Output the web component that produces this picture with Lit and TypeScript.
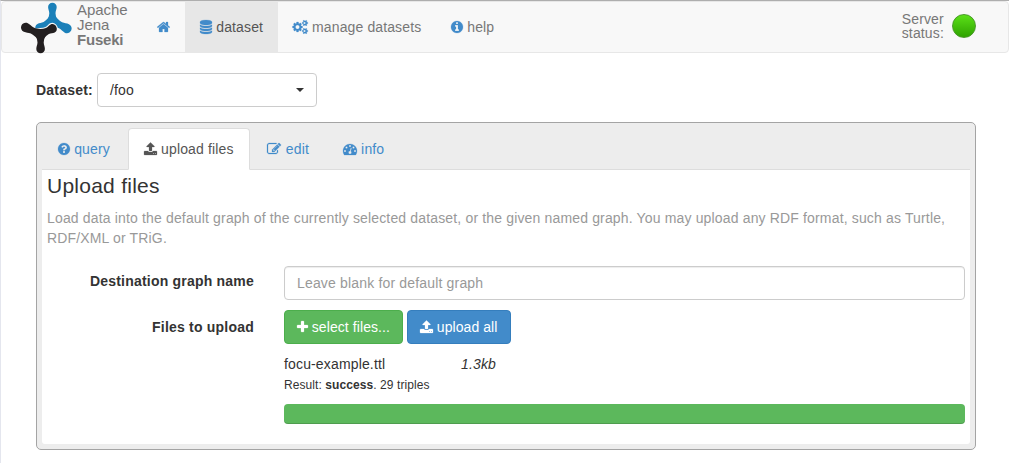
import { LitElement, html, css, svg } from "lit";
import { customElement, property } from "lit/decorators.js";

const DISC =
  "m640 416q0 209-103 385.5t-279.5 279.5-385.5 103-385.5-103-279.5-279.5-103-385.5 103-385.5 279.5-279.5 385.5-103 385.5 103 279.5 279.5 103 385.5z";

const SMALL_COG =
  "v140q0 16-149 31-12 27-30 52 51 113 51 138 0 4-4 7-122 71-124 71-8 0-46-47t-52-68q-20 2-30 2t-30-2q-14 21-52 68t-46 47q-2 0-124-71-4-3-4-7 0-25 51-138-18-25-30-52-149-15-149-31v-140q0-16 149-31 13-29 30-52-51-113-51-138 0-4 4-7 4-2 35-20t59-34 30-16q8 0 46 46.5t52 67.5q20-2 30-2t30 2q51-71 92-112l6-2q4 0 124 70 4 3 4 7 0 25-51 138 17 23 30 52 149 15 149 31z";

const GAUGE_DOT = "q0-53-37.5-90.5t-90.5-37.5-90.5 37.5-37.5 90.5 37.5 90.5 90.5 37.5 90.5-37.5 37.5-90.5z";

const DB_RING = "q237 0 443-43t325-127v170q0 69-103 128t-280 93.5-385 34.5-385-34.5-280-93.5-103-128v-170q119 84 325 127t443 43z";

interface Glyph {
  x: number;
  w: number;
  d: string;
}

/* Glyphs on a 1792-unit em; x and w give the advance box. */
const GLYPHS: Record<string, Glyph> = {
  home: {
    x: 64,
    w: 1664,
    d: "M1472 992v480q0 26-19 45t-45 19h-384v-384h-256v384h-384q-26 0-45-19t-19-45v-480q0-1 .5-3t.5-3l575-474 575 474q1 2 1 6zm223-69l-62 74q-8 9-21 11h-3q-13 0-21-7l-692-577-692 577q-12 8-24 7-13-2-21-11l-62-74q-8-10-7-23.5t11-21.5l719-599q32-26 76-26t76 26l244 204v-195q0-14 9-23t23-9h192q14 0 23 9t9 23v408l219 182q10 8 11 21.5t-7 23.5z",
  },
  database: {
    x: 128,
    w: 1536,
    d: `M896 768${DB_RING}M896 1536${DB_RING}M896 1152${DB_RING}M896 0q208 0 385 34.5t280 93.5 103 128v128q0 69-103 128t-280 93.5-385 34.5-385-34.5-280-93.5-103-128v-128q0-69 103-128t280-93.5 385-34.5z`,
  },
  cogs: {
    x: 0,
    w: 1920,
    d: `M832 896q0-106-75-181t-181-75-181 75-75 181 75 181 181 75 181-75 75-181zm768 512q0-52-38-90t-90-38-90 38-38 90q0 53 37.5 90.5t90.5 37.5 90.5-37.5 37.5-90.5zm0-1024q0-52-38-90t-90-38-90 38-38 90q0 53 37.5 90.5t90.5 37.5 90.5-37.5 37.5-90.5zm-384 421v185q0 10-7 19.5t-16 10.5l-155 24q-11 35-32 76 34 48 90 115 7 11 7 20 0 12-7 19-23 30-82.5 89.5t-78.5 59.5q-11 0-21-7l-115-90q-37 19-77 31-11 108-23 155-7 24-30 24h-186q-11 0-20-7.5t-10-17.5l-23-153q-34-10-75-31l-118 89q-7 7-20 7-11 0-21-8-144-133-144-160 0-9 7-19 10-14 41-53t47-61q-23-44-35-82l-152-24q-10-1-17-9.5t-7-19.5v-185q0-10 7-19.5t16-10.5l155-24q11-35 32-76-34-48-90-115-7-11-7-20 0-12 7-20 22-30 82-89t79-59q11 0 21 7l115 90q34-18 77-32 11-108 23-154 7-24 30-24h186q11 0 20 7.5t10 17.5l23 153q34 10 75 31l118-89q8-7 20-7 11 0 21 8 144 133 144 160 0 8-7 19-12 16-42 54t-45 60q23 48 34 82l152 23q10 2 17 10.5t7 19.5zM1920 1338${SMALL_COG}M1920 314${SMALL_COG}`,
  },
  info: {
    x: 128,
    w: 1536,
    d: `M1152 1376v-160q0-14-9-23t-23-9h-96v-512q0-14-9-23t-23-9h-320q-14 0-23 9t-9 23v160q0 14 9 23t23 9h96v320h-96q-14 0-23 9t-9 23v160q0 14 9 23t23 9h448q14 0 23-9t9-23zm-128-896v-160q0-14-9-23t-23-9h-192q-14 0-23 9t-9 23v160q0 14 9 23t23 9h192q14 0 23-9t9-23z${DISC}`,
  },
  question: {
    x: 128,
    w: 1536,
    d: "M1024 1376v-192q0-14-9-23t-23-9h-192q-14 0-23 9t-9 23v192q0 14 9 23t23 9h192q14 0 23-9t9-23zm256-672q0-88-55.5-163t-138.5-116-170-41q-243 0-371 213-15 24 8 42l132 100q7 6 19 6 16 0 25-12 53-68 86-92 34-24 86-24 48 0 85.5 26t37.5 59q0 38-20 61t-68 45q-63 28-115.5 86.5t-52.5 125.5v36q0 14 9 23t23 9h192q14 0 23-9t9-23q0-19 21.5-49.5t54.5-49.5q32-18 49-28.5t46-35 44.5-48 28-60.5 12.5-81zm384 192q0 209-103 385.5t-279.5 279.5-385.5 103-385.5-103-279.5-279.5-103-385.5 103-385.5 279.5-279.5 385.5-103 385.5 103 279.5 279.5 103 385.5z",
  },
  upload: {
    x: 64,
    w: 1664,
    d: "M1344 1472q0-26-19-45t-45-19-45 19-19 45 19 45 45 19 45-19 19-45zm256 0q0-26-19-45t-45-19-45 19-19 45 19 45 45 19 45-19 19-45zm128-224v320q0 40-28 68t-68 28h-1472q-40 0-68-28t-28-68v-320q0-40 28-68t68-28h427q21 56 70.5 92t110.5 36h256q61 0 110.5-36t70.5-92h427q40 0 68 28t28 68zm-325-648q-17 40-59 40h-256v448q0 26-19 45t-45 19h-256q-26 0-45-19t-19-45v-448h-256q-42 0-59-40-17-39 14-69l448-448q18-19 45-19t45 19l448 448q31 30 14 69z",
  },
  edit: {
    x: 0,
    w: 1792,
    d: "M888 1184l116-116-152-152-116 116v56h96v96h56zm440-720q-16-16-33 1l-350 350q-17 17-1 33t33-1l350-350q17-17 1-33zm80 594v190q0 119-84.5 203.5t-203.5 84.5h-832q-119 0-203.5-84.5t-84.5-203.5v-832q0-119 84.5-203.5t203.5-84.5h832q63 0 117 25 15 7 18 23 3 17-9 29l-49 49q-14 14-32 8-23-6-45-6h-832q-66 0-113 47t-47 113v832q0 66 47 113t113 47h832q66 0 113-47t47-113v-126q0-13 9-22l64-64q15-15 35-7t20 29zm-96-738l288 288-672 672h-288v-288zm444 132l-92 92-288-288 92-92q28-28 68-28t68 28l152 152q28 28 28 68t-28 68z",
  },
  gauge: {
    x: 0,
    w: 1792,
    d: `M384 1152${GAUGE_DOT}M576 704${GAUGE_DOT}M1004 1185l101-382q6-26-7.5-48.5t-38.5-29.5-48 6.5-30 39.5l-101 382q-60 5-107 43.5t-63 98.5q-20 77 20 146t117 89 146-20 89-117q16-60-6-117t-72-91zM1664 1152${GAUGE_DOT}M1024 512${GAUGE_DOT}M1472 704${GAUGE_DOT}M1792 1152q0 261-141 483-19 29-54 29h-1402q-35 0-54-29-141-221-141-483 0-182 71-348t191-286 286-191 348-71 348 71 286 191 191 286 71 348z`,
  },
  plus: {
    x: 192,
    w: 1408,
    d: "M1600 736v192q0 40-28 68t-68 28h-416v416q0 40-28 68t-68 28h-192q-40 0-68-28t-28-68v-416h-416q-40 0-68-28t-28-68v-192q0-40 28-68t68-28h416v-416q0-40 28-68t68-28h192q40 0 68 28t28 68v416h416q40 0 68 28t28 68z",
  },
};

@customElement("fa-icon")
class FaIcon extends LitElement {
  static styles = css`
    :host {
      display: inline-block;
      height: 14px;
      margin-right: 0.3px;
      vertical-align: -2px;
      line-height: 0;
    }
    .glyph {
      display: block;
      fill: currentColor;
      stroke: currentColor;
      stroke-width: 30;
      overflow: visible;
    }
  `;
  @property() name = "home";

  render() {
    const g = GLYPHS[this.name];
    return html`<svg class="glyph" width=${g.w / 128} height="14" viewBox="${g.x} 0 ${g.w} 1792"><path d=${g.d}></path></svg>`;
  }
}

/* One lobe of the propeller, pointing up from the hub. */
const LOBE =
  "M-6 3.4C-5.6 -1-3.2 -3.5-3.1 -8C-3.2 -10.3-4.3 -12-4.3 -14.2C-4.3 -16.6-2.4 -18.4 0 -18.4C2.4 -18.4 4.3 -16.6 4.3 -14.2C4.3 -12 3.2 -10.3 3.1 -8C3.2 -3.5 5.6 -1 6 3.4Z";

/* Each lobe is [angle, width factor, length factor]. */
const lobes = (list: number[][]) =>
  list.map(([a, w, l]) => svg`<path d=${LOBE} transform="rotate(${a}) scale(${w} ${l})"></path>`);

@customElement("app-root")
class AppRoot extends LitElement {
  static styles = css`
    :host {
      display: block;
      box-sizing: border-box;
      height: 463px;
      overflow: hidden;
      border-top: 1px solid #aeaeae;
      border-left: 1px solid #e4e6ee;
      background: #fff;
      color: #333;
      font: 14px/20px "Liberation Sans", Arial, sans-serif;
      letter-spacing: 0.15px;
    }
    * {
      box-sizing: border-box;
    }
    .navbar {
      display: flex;
      height: 52px;
      border: 1px solid #e7e7e7;
      border-radius: 4px;
      background: #f8f8f8;
      color: #777;
    }
    .brand {
      display: flex;
      width: 140px;
      padding-left: 18px;
      gap: 4px;
      font-size: 15px;
      line-height: 15px;
      letter-spacing: -0.05px;
    }
    .brand b {
      letter-spacing: -0.2px;
    }
    .logo {
      flex: none;
      width: 53px;
      height: 52px;
      overflow: visible;
    }
    .item {
      padding: 15px 14.7px 15px 15px;
      white-space: nowrap;
      letter-spacing: 0.12px;
    }
    .item fa-icon {
      color: #428bca;
    }
    .item.active {
      background: #e7e7e7;
      color: #555;
    }
    .status {
      display: flex;
      margin-left: auto;
      padding: 10px 32px 0 0;
      line-height: 14px;
      gap: 8px;
    }
    .lamp {
      width: 24px;
      height: 24px;
      margin-top: 2px;
      border: 1px solid #4a9a2a;
      border-radius: 50%;
      background: linear-gradient(#5be018, #2fa300);
    }
    .main {
      padding: 20px 33px 0 35px;
    }
    .picker {
      display: flex;
      align-items: center;
      gap: 4px;
      font-weight: bold;
    }
    .picker-label {
      width: 57px;
      letter-spacing: 0.22px;
    }
    .select {
      display: flex;
      align-items: center;
      justify-content: space-between;
      width: 220px;
      height: 34px;
      padding: 0 12px;
      border: 1px solid #ccc;
      border-radius: 4px;
      font-weight: normal;
    }
    .caret {
      border: 4px solid transparent;
      border-top-color: #333;
      border-bottom: 0;
    }
    .panel {
      height: 328px;
      margin-top: 15px;
      padding: 5px;
      border: 1px solid #a4a4a4;
      border-radius: 5px;
      background: #ededed;
    }
    .tabs {
      display: flex;
      gap: 2px;
      height: 42px;
      border-bottom: 1px solid #ddd;
    }
    .tab {
      height: 42px;
      padding: 10px 15px 10px 14.8px;
      border: 1px solid transparent;
      border-radius: 4px 4px 0 0;
      color: #428bca;
      white-space: nowrap;
    }
    .tab.active {
      border-color: #ddd #ddd #fff;
      background: #fff;
      color: #555;
    }
    .content {
      height: 274px;
      padding: 4px 5px 5px;
      border-radius: 0 0 3px 3px;
      background: #fff;
    }
    .title {
      margin: 0;
      font-size: 21px;
      line-height: 23px;
      font-weight: normal;
      letter-spacing: 0.25px;
    }
    .lead {
      margin: 11px 0 18px;
      color: #999;
      white-space: nowrap;
      letter-spacing: 0.156px;
    }
    .row {
      display: grid;
      grid-template-columns: 207px 681px;
      column-gap: 30px;
      margin-bottom: 10px;
    }
    .label {
      padding-top: 5px;
      text-align: right;
      font-weight: bold;
      letter-spacing: 0.21px;
    }
    .label.low {
      padding-top: 7px;
    }
    .field {
      height: 34px;
      padding: 6px 12px;
      border: 1px solid #ccc;
      border-radius: 4px;
      box-shadow: inset 0 1px 1px rgba(0, 0, 0, 0.075);
      color: #999;
      letter-spacing: 0.17px;
    }
    .buttons {
      display: flex;
      gap: 4px;
      letter-spacing: 0.08px;
    }
    .btn {
      height: 34px;
      padding: 6px 12px;
      border: 1px solid #4cae4c;
      border-radius: 4px;
      background: #5cb85c;
      color: #fff;
      white-space: nowrap;
      text-indent: -0.5px;
    }
    .btn.select-files {
      width: 119px;
    }
    .btn.primary {
      width: 104px;
      border-color: #357ebd;
      background: #428bca;
    }
    .file {
      display: grid;
      grid-template-columns: 177px 1fr;
      padding: 10px 0 0;
    }
    .result {
      padding-top: 1px;
      margin-bottom: 9px;
      font-size: 12px;
      line-height: 20px;
      letter-spacing: 0.08px;
    }
    .bar {
      height: 20px;
      border-radius: 4px;
      background: #5cb85c;
      box-shadow: inset 0 -1px 0 rgba(0, 0, 0, 0.15);
    }
  `;

  render() {
    return html`
      <nav class="navbar">
        <div class="brand">
          <svg class="logo" viewBox="20 2 53 52">
            <g fill="#1b80b9" transform="translate(52.4 21.2)">
              ${lobes([
                [0, 1, 1],
                [116.5, 1.1, 1.14],
                [242, 1.08, 1.02],
              ])}
            </g>
            <g transform="translate(40.6 34.4)">
              <g fill="#f8f8f8" stroke="#f8f8f8" stroke-width="2.2">${lobes([[64, 1.06, 0.95]])}</g>
              <g fill="#231f20">
                ${lobes([
                  [180, 1, 1.02],
                  [64, 1.06, 0.95],
                  [295, 1.1, 1.15],
                ])}
              </g>
            </g>
          </svg>
          <div class="name">Apache<br />Jena<br /><b>Fuseki</b></div>
        </div>
        <div class="item"><fa-icon name="home"></fa-icon></div>
        <div class="item active"><fa-icon name="database"></fa-icon> dataset</div>
        <div class="item"><fa-icon name="cogs"></fa-icon> manage datasets</div>
        <div class="item"><fa-icon name="info"></fa-icon> help</div>
        <div class="status">
          <div>Server<br />status:</div>
          <div class="lamp"></div>
        </div>
      </nav>
      <main class="main">
        <div class="picker">
          <span class="picker-label">Dataset:</span>
          <div class="select"><span>/foo</span><span class="caret"></span></div>
        </div>
        <section class="panel">
          <div class="tabs">
            <div class="tab"><fa-icon name="question"></fa-icon> query</div>
            <div class="tab active"><fa-icon name="upload"></fa-icon> upload files</div>
            <div class="tab"><fa-icon name="edit"></fa-icon> edit</div>
            <div class="tab"><fa-icon name="gauge"></fa-icon> info</div>
          </div>
          <div class="content">
            <h3 class="title">Upload files</h3>
            <p class="lead">
              Load data into the default graph of the currently selected dataset, or the given named graph. You may
              upload any RDF format, such as Turtle,<br />RDF/XML or TRiG.
            </p>
            <div class="row">
              <div class="label">Destination graph name</div>
              <div class="field">Leave blank for default graph</div>
            </div>
            <div class="row">
              <div class="label low">Files to upload</div>
              <div>
                <div class="buttons">
                  <div class="btn select-files"><fa-icon name="plus"></fa-icon> select files...</div>
                  <div class="btn primary"><fa-icon name="upload"></fa-icon> upload all</div>
                </div>
                <div class="file"><span>focu-example.ttl</span><i>1.3kb</i></div>
                <div class="result">Result: <b>success</b>. 29 triples</div>
                <div class="bar"></div>
              </div>
            </div>
          </div>
        </section>
      </main>
    `;
  }
}
